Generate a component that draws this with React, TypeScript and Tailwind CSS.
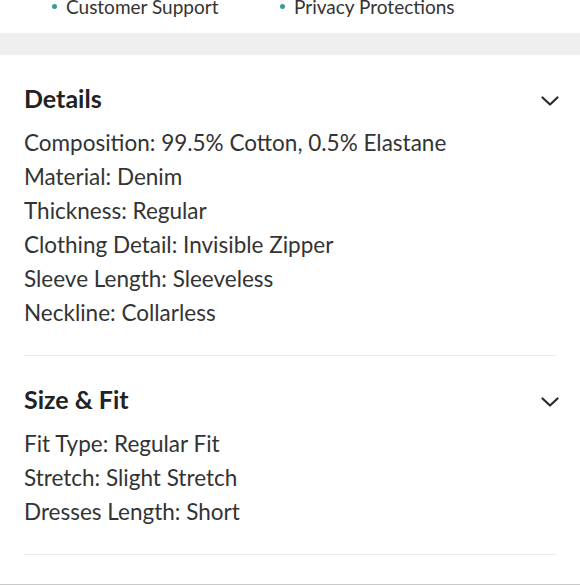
import React from "react";

type Section = {
  title: string;
  rows: string[];
};

const SECTIONS: Section[] = [
  {
    title: "Details",
    rows: [
      "Composition: 99.5% Cotton, 0.5% Elastane",
      "Material: Denim",
      "Thickness: Regular",
      "Clothing Detail: Invisible Zipper",
      "Sleeve Length: Sleeveless",
      "Neckline: Collarless",
    ],
  },
  {
    title: "Size & Fit",
    rows: ["Fit Type: Regular Fit", "Stretch: Slight Stretch", "Dresses Length: Short"],
  },
];

function Chevron() {
  return (
    <svg width="18" height="10" viewBox="0 0 18 10" fill="none" className="mt-[6px]">
      <polyline
        points="1.5,1.5 9,8.5 16.5,1.5"
        stroke="#2a2a2a"
        strokeWidth="2.2"
        strokeLinecap="round"
        strokeLinejoin="round"
      />
    </svg>
  );
}

export default function App() {
  return (
    <div className="w-[580px] h-[585px] overflow-hidden bg-white font-['Lato',sans-serif] text-[#333]">
      {/* Service bullets (scrolled off top) */}
      <div className="h-[33px] overflow-hidden">
        <div className="flex -mt-[5px] text-[19px] leading-[24px] text-[#333]">
          <div className="flex items-center w-[280px] pl-[52px]">
            <span className="w-[5px] h-[5px] rounded-full bg-[#3c9a95] mr-[9px] -mt-[1px]" />
            Customer Support
          </div>
          <div className="flex items-center">
            <span className="w-[5px] h-[5px] rounded-full bg-[#3c9a95] mr-[9px] -mt-[1px]" />
            Privacy Protections
          </div>
        </div>
      </div>

      <div className="h-[22px] bg-[#efefef]" />

      <div className="px-6">
        {SECTIONS.map((s) => (
          <div key={s.title} className="pt-[28px] pb-[25px] border-b border-[#ececec]">
            <div className="flex items-center justify-between">
              <h2 className="text-[25px] leading-[30px] font-bold text-[#222]">{s.title}</h2>
              <div className="-mr-[3px]">
                <Chevron />
              </div>
            </div>
            <div className="mt-[13px]">
              {s.rows.map((r) => (
                <p key={r} className="text-[22.5px] leading-[34px] text-[#333]">
                  {r}
                </p>
              ))}
            </div>
          </div>
        ))}
      </div>

      <div className="mt-[29px] border-t border-[#c8c8c8]" />
    </div>
  );
}
